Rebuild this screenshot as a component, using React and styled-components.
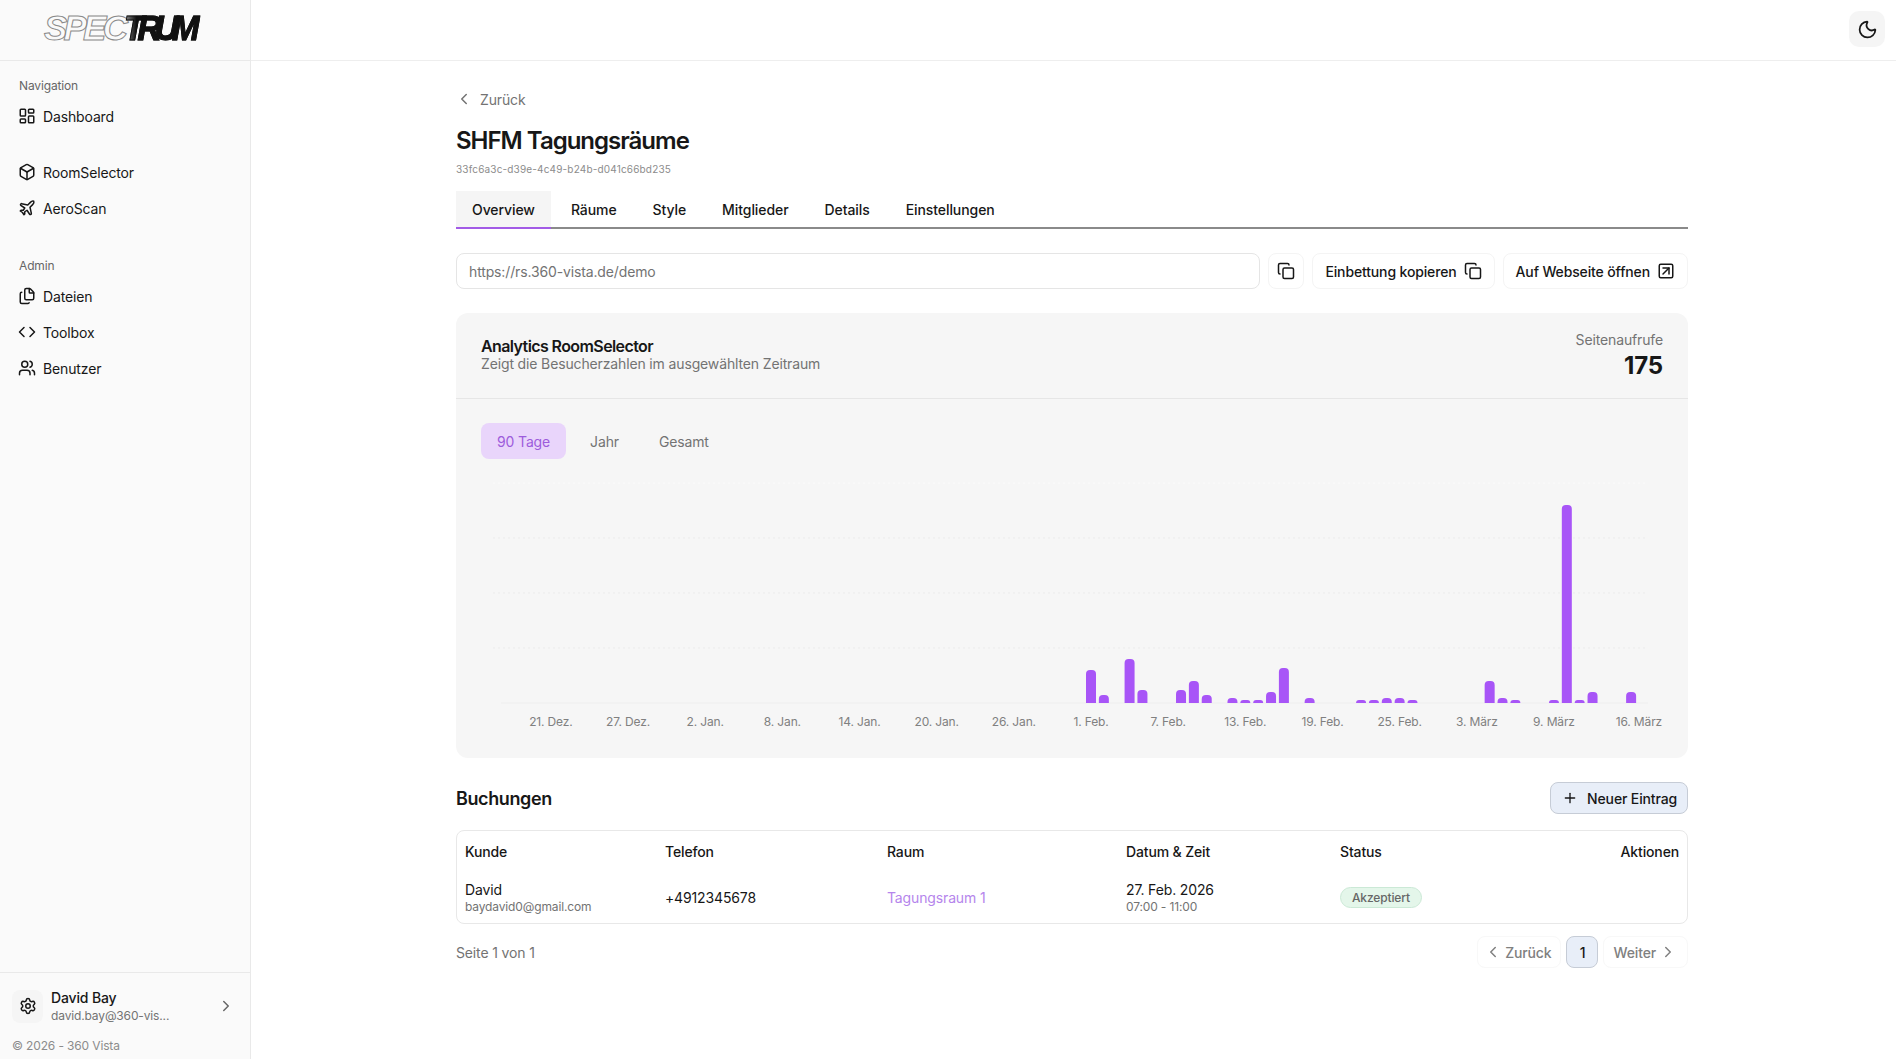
import React from "react";
import styled, { createGlobalStyle } from "styled-components";
import {
  LayoutDashboard,
  Box,
  Plane,
  Files,
  Code,
  Users,
  Settings,
  ChevronRight,
  ChevronLeft,
  Moon,
  Copy,
  SquareArrowUpRight,
  Plus,
} from "lucide-react";

const GlobalStyle = createGlobalStyle`
  * { box-sizing: border-box; }
  html, body { margin: 0; padding: 0; background: #fff; }
  body {
    font-family: Inter, "Liberation Sans", sans-serif;
    color: #171717;
    font-size: 14px;
    letter-spacing: -0.14px;
  }
`;

const Page = styled.div`
  display: flex;
  height: 1059px;
  overflow: hidden;
`;

// sidebar
const Sidebar = styled.aside`
  width: 251px;
  flex-shrink: 0;
  display: flex;
  flex-direction: column;
  background: #fafafa;
  border-right: 1px solid #e9e9e9;
`;

const LogoBar = styled.div`
  height: 61px;
  padding: 8px 0 0 44px;
  border-bottom: 1px solid #e9e9e9;
`;

const LogoText = styled.div`
  display: flex;
  font-family: "Liberation Sans", sans-serif;
  font-weight: 700;
  font-style: italic;
  font-size: 35px;
  line-height: 40px;
  letter-spacing: -3.8px;
`;

const LogoOutline = styled.span`
  color: #fafafa;
  -webkit-text-stroke: 1px #8a8a8a;
`;

const LogoSolid = styled.span`
  display: inline-block;
  background: linear-gradient(90deg, #9a9a9a 0, #111 16%);
  -webkit-background-clip: text;
  background-clip: text;
  color: transparent;
  -webkit-text-stroke: 1px #111;
  letter-spacing: -7px;
  padding-right: 8px;
  transform: scaleX(0.94);
  transform-origin: left center;
`;

const NavArea = styled.nav`
  flex: 1;
  padding: 15px 0 0 0;
`;

const NavLabel = styled.div`
  height: 20px;
  line-height: 20px;
  padding-left: 19px;
  font-size: 12px;
  color: #666;
  margin-top: ${(p) => p.$top || 0}px;
  margin-bottom: 2px;
`;

const NavItem = styled.div`
  display: flex;
  align-items: center;
  gap: 7px;
  height: 36px;
  padding-left: 18px;
  font-size: 14px;
  margin-top: ${(p) => p.$top || 0}px;
  svg {
    width: 18px;
    height: 18px;
    flex-shrink: 0;
  }
`;

const UserBox = styled.div`
  border-top: 1px solid #e9e9e9;
  padding: 16px 12px 0;
  height: 87px;
`;

const UserRow = styled.div`
  display: flex;
  align-items: center;
`;

const GearTile = styled.div`
  width: 31px;
  height: 33px;
  border-radius: 8px;
  background: #f5f5f5;
  display: flex;
  align-items: center;
  justify-content: center;
  margin: 0 8px 2px 0;
  svg {
    width: 18px;
    height: 18px;
  }
`;

const UserText = styled.div`
  flex: 1;
`;

const UserName = styled.div`
  font-size: 14px;
  font-weight: 450;
  line-height: 18px;
`;

const UserMail = styled.div`
  font-size: 12px;
  line-height: 18px;
  color: #737373;
`;

const UserChevron = styled(ChevronRight)`
  width: 18px;
  height: 18px;
  color: #666;
  margin: 0 3px 3px 0;
`;

const Copyright = styled.div`
  font-size: 12px;
  color: #8c8c8c;
  margin-top: 13px;
`;

// main
const Main = styled.main`
  flex: 1;
  display: flex;
  flex-direction: column;
  min-width: 0;
`;

const TopBar = styled.header`
  height: 61px;
  flex-shrink: 0;
  display: flex;
  justify-content: flex-end;
  align-items: flex-start;
  padding: 11px 11px 0 0;
  border-bottom: 1px solid #eeeeee;
`;

const ThemeButton = styled.div`
  width: 36px;
  height: 36px;
  border-radius: 10px;
  background: #f5f5f5;
  display: flex;
  align-items: center;
  justify-content: center;
  svg {
    width: 21px;
    height: 21px;
  }
`;

const Content = styled.div`
  width: 1232px;
  margin-left: 205px;
  padding-top: 28px;
`;

const BackLink = styled.div`
  display: flex;
  align-items: center;
  gap: 7px;
  height: 20px;
  margin-left: -1px;
  color: #737373;
  font-size: 14px;
  svg {
    width: 18px;
    height: 18px;
  }
`;

const Title = styled.h1`
  margin: 16px 0 0;
  font-size: 24px;
  line-height: 32px;
  font-weight: 600;
  letter-spacing: -1px;
`;

const RoomId = styled.div`
  margin-top: 5px;
  font-size: 10px;
  line-height: 14px;
  color: #8c8c8c;
  letter-spacing: 0.17px;
`;

const Tabs = styled.div`
  display: flex;
  gap: 4px;
  height: 38px;
  margin-top: 15px;
  border-bottom: 2px solid #8a8a8a;
`;

const Tab = styled.div`
  height: 38px;
  padding: 0 16px;
  display: flex;
  align-items: center;
  font-size: 14px;
  font-weight: 450;
  letter-spacing: -0.08px;
  background: ${(p) => (p.$active ? "#f5f5f5" : "transparent")};
  border-bottom: 2px solid ${(p) => (p.$active ? "#a25be6" : "transparent")};
`;

const UrlRow = styled.div`
  display: flex;
  gap: 8px;
  margin-top: 24px;
  height: 36px;
`;

const UrlInput = styled.div`
  flex: 1;
  border: 1px solid #e5e5e5;
  border-radius: 8px;
  padding: 0 12px;
  display: flex;
  align-items: center;
  color: #737373;
  font-size: 14px;
`;

const OutlineButton = styled.div`
  height: 36px;
  padding: 0 ${(p) => (p.$icon ? "8px" : "12px")};
  border: 1px solid #f4f4f4;
  border-radius: 8px;
  display: flex;
  align-items: center;
  gap: 7px;
  font-size: 14px;
  font-weight: 450;
  svg {
    width: 18px;
    height: 18px;
  }
`;

const Card = styled.section`
  margin-top: 24px;
  height: 445px;
  background: #f6f6f6;
  border-radius: 12px;
`;

const CardHead = styled.div`
  height: 86px;
  padding: 0 25px;
  display: flex;
  justify-content: space-between;
  border-bottom: 1px solid #e6e6e6;
`;

const CardTitleBlock = styled.div`
  padding-top: 24px;
`;

const CardTitle = styled.div`
  font-size: 16px;
  line-height: 18px;
  font-weight: 600;
  letter-spacing: -0.6px;
`;

const CardSub = styled.div`
  font-size: 14px;
  line-height: 18px;
  color: #737373;
`;

const Stat = styled.div`
  padding-top: 17px;
  text-align: right;
`;

const StatLabel = styled.div`
  font-size: 14px;
  line-height: 20px;
  color: #737373;
`;

const StatValue = styled.div`
  font-size: 24px;
  line-height: 32px;
  font-weight: 700;
`;

const CardBody = styled.div`
  padding: 24px 25px 0;
`;

const Pills = styled.div`
  display: flex;
  gap: 8px;
`;

const Pill = styled.div`
  height: 36px;
  padding: 0 16px;
  border-radius: 8px;
  display: flex;
  align-items: center;
  font-size: 14px;
  color: ${(p) => (p.$active ? "#9d5cdc" : "#737373")};
  background: ${(p) => (p.$active ? "#e9d5fb" : "transparent")};
`;

const ChartSvg = styled.svg`
  display: block;
  margin-top: 16px;
`;

const AxisLabel = styled.text`
  font-family: Inter, "Liberation Sans", sans-serif;
  font-size: 12px;
  fill: #808080;
`;

const SectionHead = styled.div`
  margin-top: 24px;
  height: 32px;
  display: flex;
  align-items: center;
  justify-content: space-between;
`;

const SectionTitle = styled.h2`
  margin: 0;
  font-size: 18px;
  font-weight: 600;
  letter-spacing: -0.4px;
`;

const PrimaryButton = styled.div`
  height: 32px;
  padding: 0 10px 0 11px;
  background: #e8eef8;
  border: 1px solid #c6ccd6;
  border-radius: 8px;
  display: flex;
  align-items: center;
  gap: 9px;
  font-size: 14px;
  font-weight: 450;
  svg {
    width: 16px;
    height: 16px;
  }
`;

const TableBox = styled.div`
  margin-top: 16px;
  height: 94px;
  border: 1px solid #e8e8e8;
  border-radius: 8px;
  padding: 0 8px;
`;

const TableRow = styled.div`
  display: grid;
  grid-template-columns: 200px 222px 239px 214px 1fr auto;
  align-items: center;
  height: ${(p) => p.$height}px;
`;

const HeadCell = styled.div`
  font-size: 14px;
  font-weight: 450;
`;

const StackedCell = styled.div`
  padding-top: 2px;
`;

const MainCell = styled.div`
  font-size: 14px;
  line-height: 17px;
`;

const SubCell = styled.div`
  font-size: 12px;
  line-height: 18px;
  color: #737373;
`;

const RoomLink = styled.div`
  font-size: 14px;
  color: #b585ec;
`;

const Badge = styled.span`
  display: inline-flex;
  align-items: center;
  height: 21px;
  padding: 0 11px;
  border-radius: 11px;
  background: #e4f6ea;
  border: 1px solid #cbe9d6;
  color: #666;
  font-size: 12px;
  font-weight: 450;
`;

const PagerRow = styled.div`
  margin-top: 12px;
  display: flex;
  align-items: center;
  justify-content: space-between;
`;

const PagerInfo = styled.div`
  font-size: 14px;
  color: #737373;
`;

const Pager = styled.div`
  display: flex;
  gap: 5px;
`;

const PagerButton = styled.div`
  height: 32px;
  padding: 0 ${(p) => (p.$prev ? "9px 0 6px" : "10px 0 9px")};
  display: flex;
  align-items: center;
  gap: 3px;
  border-radius: 8px;
  border: 1px solid #f8f8f8;
  color: #808080;
  font-size: 14px;
  font-weight: 450;
  svg {
    width: 18px;
    height: 18px;
  }
`;

const PagerCurrent = styled.div`
  width: 32px;
  height: 32px;
  display: flex;
  align-items: center;
  justify-content: center;
  border-radius: 8px;
  background: #e8eef8;
  border: 1px solid #c6ccd6;
  font-size: 14px;
  font-weight: 450;
`;

// slot index and pixel height of every bar, one slot per day from 1. Feb.
const bars = [
  [0, 33], [1, 8], [3, 44], [4, 13], [7, 13], [8, 22], [9, 8],
  [11, 5], [12, 3], [13, 3], [14, 11], [15, 35], [17, 5],
  [21, 3], [22, 3], [23, 5], [24, 5], [25, 3],
  [31, 22], [32, 5], [33, 3],
  [36, 3], [37, 198], [38, 3], [39, 11], [42, 11],
];

const ticks = [
  ["21. Dez.", -42], ["27. Dez.", -36], ["2. Jan.", -30], ["8. Jan.", -24],
  ["14. Jan.", -18], ["20. Jan.", -12], ["26. Jan.", -6], ["1. Feb.", 0],
  ["7. Feb.", 6], ["13. Feb.", 12], ["19. Feb.", 18], ["25. Feb.", 24],
  ["3. März", 30], ["9. März", 36], ["16. März", 42.6],
];

const SLOT = 12.86;
const ORIGIN = 610;
const BASE = 228;

const barPath = (cx, h) => {
  const w = 10;
  const r = Math.min(4, h);
  const x = cx - w / 2;
  return `M${x} ${BASE}V${BASE - h + r}Q${x} ${BASE - h} ${x + r} ${BASE - h}H${x + w - r}Q${x + w} ${BASE - h} ${x + w} ${BASE - h + r}V${BASE}Z`;
};

const Chart = () => (
  <ChartSvg width="1182" height="260" viewBox="0 0 1182 260">
    {[8, 63, 118, 173].map((y) => (
      <line
        key={y}
        x1="12"
        x2="1167"
        y1={y}
        y2={y}
        stroke={y === 8 ? "#fbfbfb" : "#ebebeb"}
        strokeDasharray="2 3"
      />
    ))}
    <line x1="20" x2="1167" y1={BASE} y2={BASE} stroke="#eeeeee" />
    {bars.map(([slot, h]) => (
      <path key={slot} d={barPath(ORIGIN + slot * SLOT, h)} fill="#a855f7" />
    ))}
    {ticks.map(([label, day]) => (
      <AxisLabel key={label} x={ORIGIN + day * SLOT} y="251" textAnchor="middle">
        {label}
      </AxisLabel>
    ))}
  </ChartSvg>
);

export default function App() {
  return (
    <>
      <GlobalStyle />
      <Page>
        <Sidebar>
          <LogoBar>
            <LogoText>
              <LogoOutline>SPEC</LogoOutline>
              <LogoSolid>TRUM</LogoSolid>
            </LogoText>
          </LogoBar>
          <NavArea>
            <NavLabel>Navigation</NavLabel>
            <NavItem>
              <LayoutDashboard />
              Dashboard
            </NavItem>
            <NavItem $top={20}>
              <Box />
              RoomSelector
            </NavItem>
            <NavItem>
              <Plane />
              AeroScan
            </NavItem>
            <NavLabel $top={30}>Admin</NavLabel>
            <NavItem>
              <Files />
              Dateien
            </NavItem>
            <NavItem>
              <Code />
              Toolbox
            </NavItem>
            <NavItem>
              <Users />
              Benutzer
            </NavItem>
          </NavArea>
          <UserBox>
            <UserRow>
              <GearTile>
                <Settings />
              </GearTile>
              <UserText>
                <UserName>David Bay</UserName>
                <UserMail>david.bay@360-vis...</UserMail>
              </UserText>
              <UserChevron />
            </UserRow>
            <Copyright>© 2026 - 360 Vista</Copyright>
          </UserBox>
        </Sidebar>
        <Main>
          <TopBar>
            <ThemeButton>
              <Moon />
            </ThemeButton>
          </TopBar>
          <Content>
            <BackLink>
              <ChevronLeft />
              Zurück
            </BackLink>
            <Title>SHFM Tagungsräume</Title>
            <RoomId>33fc6a3c-d39e-4c49-b24b-d041c66bd235</RoomId>
            <Tabs>
              <Tab $active>Overview</Tab>
              <Tab>Räume</Tab>
              <Tab>Style</Tab>
              <Tab>Mitglieder</Tab>
              <Tab>Details</Tab>
              <Tab>Einstellungen</Tab>
            </Tabs>
            <UrlRow>
              <UrlInput>https://rs.360-vista.de/demo</UrlInput>
              <OutlineButton $icon>
                <Copy />
              </OutlineButton>
              <OutlineButton>
                Einbettung kopieren
                <Copy />
              </OutlineButton>
              <OutlineButton>
                Auf Webseite öffnen
                <SquareArrowUpRight />
              </OutlineButton>
            </UrlRow>
            <Card>
              <CardHead>
                <CardTitleBlock>
                  <CardTitle>Analytics RoomSelector</CardTitle>
                  <CardSub>Zeigt die Besucherzahlen im ausgewählten Zeitraum</CardSub>
                </CardTitleBlock>
                <Stat>
                  <StatLabel>Seitenaufrufe</StatLabel>
                  <StatValue>175</StatValue>
                </Stat>
              </CardHead>
              <CardBody>
                <Pills>
                  <Pill $active>90 Tage</Pill>
                  <Pill>Jahr</Pill>
                  <Pill>Gesamt</Pill>
                </Pills>
                <Chart />
              </CardBody>
            </Card>
            <SectionHead>
              <SectionTitle>Buchungen</SectionTitle>
              <PrimaryButton>
                <Plus />
                Neuer Eintrag
              </PrimaryButton>
            </SectionHead>
            <TableBox>
              <TableRow $height={41}>
                <HeadCell>Kunde</HeadCell>
                <HeadCell>Telefon</HeadCell>
                <HeadCell>Raum</HeadCell>
                <HeadCell>Datum &amp; Zeit</HeadCell>
                <HeadCell>Status</HeadCell>
                <HeadCell>Aktionen</HeadCell>
              </TableRow>
              <TableRow $height={51}>
                <StackedCell>
                  <MainCell>David</MainCell>
                  <SubCell>baydavid0@gmail.com</SubCell>
                </StackedCell>
                <MainCell>+4912345678</MainCell>
                <RoomLink>Tagungsraum 1</RoomLink>
                <StackedCell>
                  <MainCell>27. Feb. 2026</MainCell>
                  <SubCell>07:00 - 11:00</SubCell>
                </StackedCell>
                <div>
                  <Badge>Akzeptiert</Badge>
                </div>
                <div />
              </TableRow>
            </TableBox>
            <PagerRow>
              <PagerInfo>Seite 1 von 1</PagerInfo>
              <Pager>
                <PagerButton $prev>
                  <ChevronLeft />
                  Zurück
                </PagerButton>
                <PagerCurrent>1</PagerCurrent>
                <PagerButton>
                  Weiter
                  <ChevronRight />
                </PagerButton>
              </Pager>
            </PagerRow>
          </Content>
        </Main>
      </Page>
    </>
  );
}
